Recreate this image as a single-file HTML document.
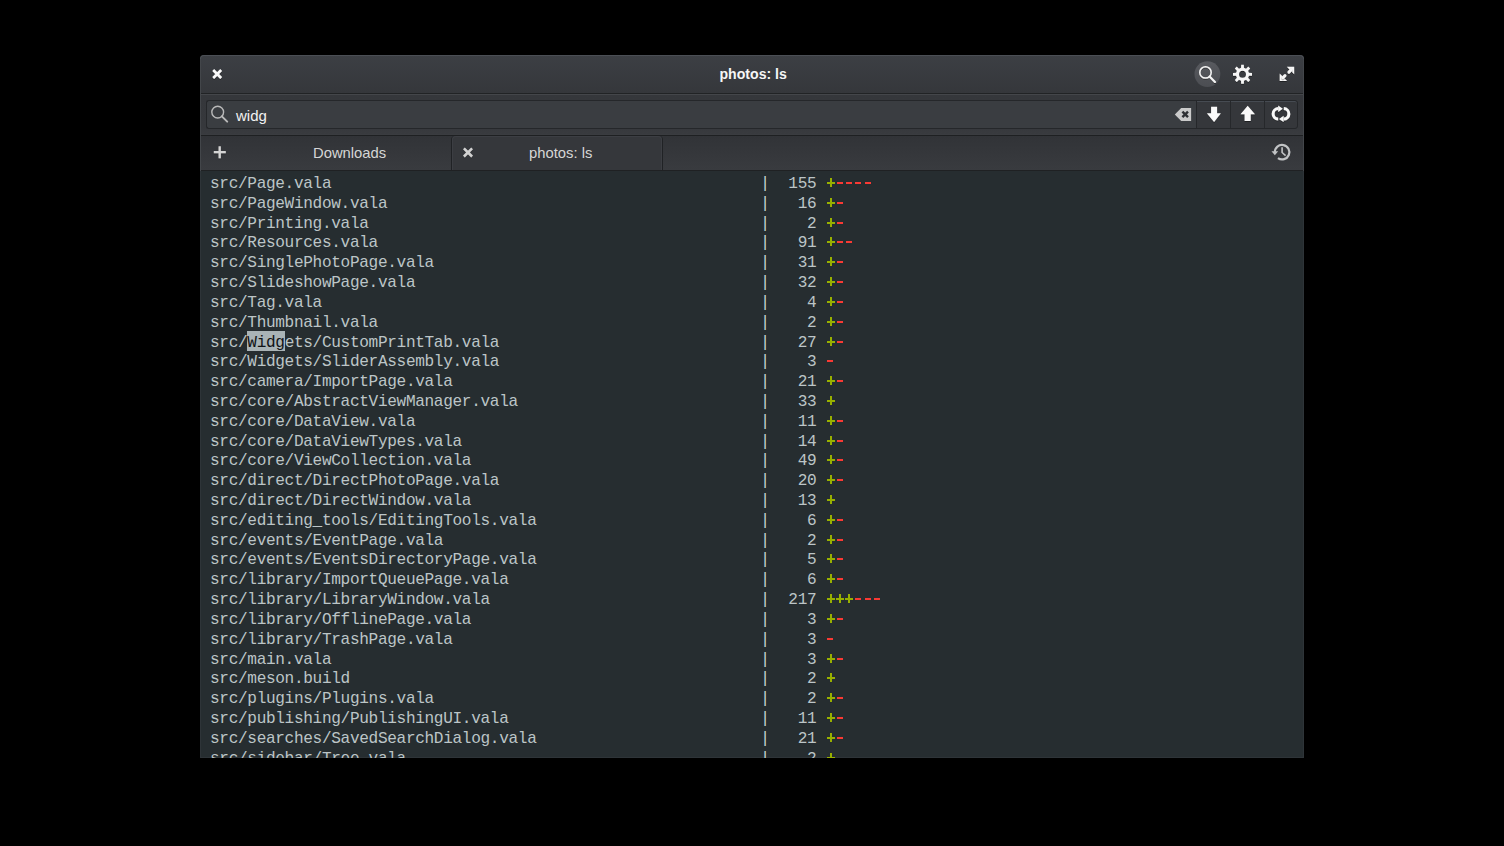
<!DOCTYPE html>
<html><head><meta charset="utf-8">
<style>
/*TOP=4.0*/ /*LH=19.815*/
html,body{margin:0;padding:0;}
body{width:1504px;height:846px;background:#000;position:relative;overflow:hidden;font-family:"Liberation Sans",sans-serif;}
.a{position:absolute;}
#win{left:200px;top:55px;width:1104px;height:703px;border-radius:4px 4px 0 0;overflow:hidden;background:#35373b;}
#title{left:0;top:0;width:1104px;height:38px;background:linear-gradient(#3c3f44,#35373b);}
#wtop{left:0;top:0;width:1104px;height:38px;box-sizing:border-box;border:1px solid #4b4f55;border-bottom:none;border-radius:4px 4px 0 0;}
#tl1{left:0;top:38px;width:1104px;height:1px;background:#212325;}
#tl2{left:0;top:39px;width:1104px;height:1px;background:#44464a;}
#srow{left:0;top:40px;width:1104px;height:40px;background:linear-gradient(#35373b,#36383c 80%,#393b3f);}
#sl1{left:0;top:79px;width:1104px;height:1px;background:#3a3c40;}
#sl2{left:0;top:80px;width:1104px;height:1px;background:#1e2022;}
#entry{left:6px;top:45px;width:991px;height:29px;box-sizing:border-box;border:1px solid #25272a;border-right:none;border-radius:3px 0 0 3px;background:#3a3d41;}
#btns{left:996px;top:45px;width:102px;height:29px;box-sizing:border-box;border:1px solid #25272a;border-radius:0 3px 3px 0;background:#35373b;box-shadow:inset 0 1px 0 #464b52;}
.sep{top:46px;width:1px;height:27px;background:#26282b;}
#tabbar{left:0;top:81px;width:1104px;height:34px;background:linear-gradient(#313337,#393b3f);}
#tab{left:251px;top:81px;width:212px;height:34px;box-sizing:border-box;border:1px solid #202225;border-top:none;border-bottom:none;border-radius:4px 4px 0 0;background:#35373b;}
#tabin{left:252px;top:81px;width:210px;height:34px;box-sizing:border-box;border:1px solid #3c3e43;border-bottom:none;border-radius:4px 4px 0 0;}
#tbl{left:0;top:115px;width:1104px;height:1px;background:#1f2123;}
#term{left:0;top:116px;width:1104px;height:587px;background:#262d30;}
#lb{left:0;top:4px;width:1px;height:699px;background:#43464a;}
#rb{left:1103px;top:4px;width:1px;height:699px;background:#43464a;}
#tlb{left:0;top:116px;width:1px;height:587px;background:#2e3438;}
#trb{left:1103px;top:116px;width:1px;height:587px;background:#2e3438;}
#tbb{left:0;top:702px;width:1104px;height:1px;background:#2e3438;}
.ui{white-space:pre;}
.ln{position:absolute;left:210px;height:19.815px;line-height:19.815px;white-space:pre;font-family:"Liberation Mono",monospace;font-size:16.1px;letter-spacing:-0.33px;color:#bcc5c7;}
.p{position:relative;color:transparent;}
.p::before{content:"";position:absolute;left:4.2px;top:3.3px;width:2px;height:8.3px;background:#98b000;}
.p::after{content:"";position:absolute;left:1px;top:6.7px;width:8px;height:2px;background:#98b000;}
.m{position:relative;color:transparent;}
.m::after{content:"";position:absolute;left:1.8px;top:7.2px;width:6px;height:2px;background:#f93a34;}
.pp{color:#c9d4d0;}
.hl{color:#111417;}
svg{position:absolute;overflow:visible;}
</style></head><body>
<div id="win" class="a">
  <div id="title" class="a"></div>
  <div id="wtop" class="a"></div>
  <div id="tl1" class="a"></div>
  <div id="tl2" class="a"></div>
  <div id="srow" class="a"></div>
  <div id="sl1" class="a"></div>
  <div id="sl2" class="a"></div>
  <div id="entry" class="a"></div>
  <div id="btns" class="a"></div>
  <div class="a sep" style="left:1030px"></div>
  <div class="a sep" style="left:1064px"></div>
  <div id="tabbar" class="a"></div>
  <div id="tab" class="a"></div>
  <div id="tabin" class="a"></div>
  <div id="tbl" class="a"></div>
  <div id="term" class="a"></div>
  <div id="lb" class="a"></div>
  <div id="rb" class="a"></div>
  <div id="tlb" class="a"></div>
  <div id="trb" class="a"></div>
  <div id="tbb" class="a"></div>
</div>
<div class="a ui" style="left:719.5px;top:66px;font-weight:bold;color:#f6f6f6;font-size:14.1px;">photos: ls</div>
<div class="a ui" style="left:236px;top:106.5px;color:#f2f2f2;font-size:15px;">widg</div>
<div class="a ui" style="left:313px;top:145px;color:#d6d6d6;font-size:14.8px;">Downloads</div>
<div class="a ui" style="left:529px;top:145px;color:#d6d6d6;font-size:14.8px;">photos: ls</div>

<!-- title close X -->
<svg class="a" style="left:0;top:0" width="1504" height="846" viewBox="0 0 1504 846">
  <defs>
    <filter id="sh" x="-50%" y="-50%" width="200%" height="200%"><feDropShadow dx="0" dy="0.6" stdDeviation="0.6" flood-color="#000" flood-opacity="0.7"/></filter>
    <linearGradient id="cg" x1="0" y1="0" x2="0" y2="1"><stop offset="0" stop-color="#585a5f"/><stop offset="1" stop-color="#4b4d52"/></linearGradient>
  </defs>
  <g stroke="#fafafa" stroke-width="2.6" stroke-linecap="butt" filter="url(#sh)">
    <path d="M213.2 70 L221.2 78 M221.2 70 L213.2 78"/>
  </g>
  <!-- search button -->
  <circle cx="1207.4" cy="74.1" r="12.9" fill="url(#cg)"/>
  <g fill="none" stroke="#f4f4f4" filter="url(#sh)">
    <circle cx="1205.5" cy="72.4" r="5.7" stroke-width="1.5"/>
    <path d="M1209.6 76.6 L1215 82" stroke-width="2.1" stroke-linecap="round"/>
  </g>
  <!-- gear -->
  <g filter="url(#sh)">
    <path fill="#f6f6f6" fill-rule="evenodd" d="M1241.06 67.86 L1241.15 64.80 L1243.85 64.80 L1243.94 67.86 L1246.04 68.73 L1248.26 66.62 L1250.18 68.54 L1248.07 70.76 L1248.94 72.86 L1252.00 72.95 L1252.00 75.65 L1248.94 75.74 L1248.07 77.84 L1250.18 80.06 L1248.26 81.98 L1246.04 79.87 L1243.94 80.74 L1243.85 83.80 L1241.15 83.80 L1241.06 80.74 L1238.96 79.87 L1236.74 81.98 L1234.82 80.06 L1236.93 77.84 L1236.06 75.74 L1233.00 75.65 L1233.00 72.95 L1236.06 72.86 L1236.93 70.76 L1234.82 68.54 L1236.74 66.62 L1238.96 68.73 Z M1246.00 74.30 A3.5 3.5 0 1 0 1239.00 74.30 A3.5 3.5 0 1 0 1246.00 74.30 Z"/>
  </g>
  <!-- fullscreen -->
  <g fill="#f6f6f6" filter="url(#sh)">
    <path d="M1294.2 66.8 L1294.2 74.2 L1286.8 66.8 Z"/>
    <path d="M1279.7 80.9 L1287.1 80.9 L1279.7 73.5 Z"/>
  </g>
  <g stroke="#f6f6f6" stroke-width="3" stroke-linecap="round" filter="url(#sh)">
    <path d="M1291 70 L1288.9 72.1"/>
    <path d="M1282.9 77.7 L1285 75.6"/>
  </g>
  <!-- entry search icon -->
  <g fill="none" stroke="#b9b9b9">
    <circle cx="217.7" cy="112.1" r="5.9" stroke-width="1.4"/>
    <path d="M221.9 116.4 L227.2 121.6" stroke-width="2" stroke-linecap="round"/>
  </g>
  <!-- clear icon -->
  <path fill="#cacaca" fill-rule="evenodd" d="M1174.8 114.5 L1181.2 107.9 L1191.1 107.9 L1191.1 121.1 L1181.2 121.1 Z"/>
  <g stroke="#2e3034" stroke-width="2.4">
    <path d="M1182.4 111.6 L1188 117.2 M1188 111.6 L1182.4 117.2"/>
  </g>
  <!-- down arrow -->
  <path fill="#fafafa" filter="url(#sh)" d="M1211.1 106.7 L1217.1 106.7 L1217.1 113.2 L1220.9 113.2 L1214.1 122.1 L1206.9 113.2 L1211.1 113.2 Z"/>
  <!-- up arrow -->
  <path fill="#fafafa" filter="url(#sh)" d="M1247.7 105.8 L1255 114.2 L1250.7 114.2 L1250.7 121.1 L1244.6 121.1 L1244.6 114.2 L1240.5 114.2 Z"/>
  <!-- cycle -->
  <g fill="none" stroke="#fafafa" stroke-width="3" filter="url(#sh)">
    <path d="M1278.2 119 A5.2 5.2 0 0 1 1278.4 108.6"/>
    <path d="M1283.8 108.6 A5.2 5.2 0 0 1 1283.6 119"/>
  </g>
  <g fill="#fafafa" filter="url(#sh)">
    <path d="M1282.8 108.7 L1278.2 105.5 L1278.2 111.9 Z"/>
    <path d="M1279 118.9 L1283.6 115.7 L1283.6 122.1 Z"/>
  </g>
  <!-- plus -->
  <g stroke="#d4d4d4" stroke-width="2.3" filter="url(#sh)">
    <path d="M219.7 146.2 L219.7 158.2 M213.8 152.1 L225.8 152.1"/>
  </g>
  <!-- tab x -->
  <g stroke="#d2d2d2" stroke-width="2.5" filter="url(#sh)">
    <path d="M463.9 148.3 L472.1 156.5 M472.1 148.3 L463.9 156.5"/>
  </g>
  <!-- history -->
  <g fill="none" stroke="#c1c3c5" stroke-width="2.2">
    <path d="M1274.85 152.4 A7.25 7.25 0 1 1 1277.94 158.14"/>
    <path d="M1282.1 147.3 L1282.1 152.5 L1285.6 155.6" stroke-width="1.6"/>
  </g>
  <path fill="#c1c3c5" d="M1271.5 151.2 L1278.2 151.2 L1274.85 155.3 Z"/>
</svg>
<div class="a" style="left:0;top:171px;width:1504px;height:587px;overflow:hidden;">
<div class="a" style="left:247.4px;top:160.2px;width:37.4px;height:19.6px;background:#a9b3b6;"></div>
<div class=ln style="top:4px">src/Page.vala                                              <span class=pp>|</span>  155 <span class=p>+</span><span class=m>-</span><span class=m>-</span><span class=m>-</span><span class=m>-</span></div>
<div class=ln style="top:24px">src/PageWindow.vala                                        <span class=pp>|</span>   16 <span class=p>+</span><span class=m>-</span></div>
<div class=ln style="top:44px">src/Printing.vala                                          <span class=pp>|</span>    2 <span class=p>+</span><span class=m>-</span></div>
<div class=ln style="top:63px">src/Resources.vala                                         <span class=pp>|</span>   91 <span class=p>+</span><span class=m>-</span><span class=m>-</span></div>
<div class=ln style="top:83px">src/SinglePhotoPage.vala                                   <span class=pp>|</span>   31 <span class=p>+</span><span class=m>-</span></div>
<div class=ln style="top:103px">src/SlideshowPage.vala                                     <span class=pp>|</span>   32 <span class=p>+</span><span class=m>-</span></div>
<div class=ln style="top:123px">src/Tag.vala                                               <span class=pp>|</span>    4 <span class=p>+</span><span class=m>-</span></div>
<div class=ln style="top:143px">src/Thumbnail.vala                                         <span class=pp>|</span>    2 <span class=p>+</span><span class=m>-</span></div>
<div class=ln style="top:163px">src/<span class=hl>Widg</span>ets/CustomPrintTab.vala                            <span class=pp>|</span>   27 <span class=p>+</span><span class=m>-</span></div>
<div class=ln style="top:182px">src/Widgets/SliderAssembly.vala                            <span class=pp>|</span>    3 <span class=m>-</span></div>
<div class=ln style="top:202px">src/camera/ImportPage.vala                                 <span class=pp>|</span>   21 <span class=p>+</span><span class=m>-</span></div>
<div class=ln style="top:222px">src/core/AbstractViewManager.vala                          <span class=pp>|</span>   33 <span class=p>+</span></div>
<div class=ln style="top:242px">src/core/DataView.vala                                     <span class=pp>|</span>   11 <span class=p>+</span><span class=m>-</span></div>
<div class=ln style="top:262px">src/core/DataViewTypes.vala                                <span class=pp>|</span>   14 <span class=p>+</span><span class=m>-</span></div>
<div class=ln style="top:281px">src/core/ViewCollection.vala                               <span class=pp>|</span>   49 <span class=p>+</span><span class=m>-</span></div>
<div class=ln style="top:301px">src/direct/DirectPhotoPage.vala                            <span class=pp>|</span>   20 <span class=p>+</span><span class=m>-</span></div>
<div class=ln style="top:321px">src/direct/DirectWindow.vala                               <span class=pp>|</span>   13 <span class=p>+</span></div>
<div class=ln style="top:341px">src/editing_tools/EditingTools.vala                        <span class=pp>|</span>    6 <span class=p>+</span><span class=m>-</span></div>
<div class=ln style="top:361px">src/events/EventPage.vala                                  <span class=pp>|</span>    2 <span class=p>+</span><span class=m>-</span></div>
<div class=ln style="top:380px">src/events/EventsDirectoryPage.vala                        <span class=pp>|</span>    5 <span class=p>+</span><span class=m>-</span></div>
<div class=ln style="top:400px">src/library/ImportQueuePage.vala                           <span class=pp>|</span>    6 <span class=p>+</span><span class=m>-</span></div>
<div class=ln style="top:420px">src/library/LibraryWindow.vala                             <span class=pp>|</span>  217 <span class=p>+</span><span class=p>+</span><span class=p>+</span><span class=m>-</span><span class=m>-</span><span class=m>-</span></div>
<div class=ln style="top:440px">src/library/OfflinePage.vala                               <span class=pp>|</span>    3 <span class=p>+</span><span class=m>-</span></div>
<div class=ln style="top:460px">src/library/TrashPage.vala                                 <span class=pp>|</span>    3 <span class=m>-</span></div>
<div class=ln style="top:480px">src/main.vala                                              <span class=pp>|</span>    3 <span class=p>+</span><span class=m>-</span></div>
<div class=ln style="top:499px">src/meson.build                                            <span class=pp>|</span>    2 <span class=p>+</span></div>
<div class=ln style="top:519px">src/plugins/Plugins.vala                                   <span class=pp>|</span>    2 <span class=p>+</span><span class=m>-</span></div>
<div class=ln style="top:539px">src/publishing/PublishingUI.vala                           <span class=pp>|</span>   11 <span class=p>+</span><span class=m>-</span></div>
<div class=ln style="top:559px">src/searches/SavedSearchDialog.vala                        <span class=pp>|</span>   21 <span class=p>+</span><span class=m>-</span></div>
<div class=ln style="top:579px">src/sidebar/Tree.vala                                      <span class=pp>|</span>    2 <span class=p>+</span></div>
</div>
</body></html>
